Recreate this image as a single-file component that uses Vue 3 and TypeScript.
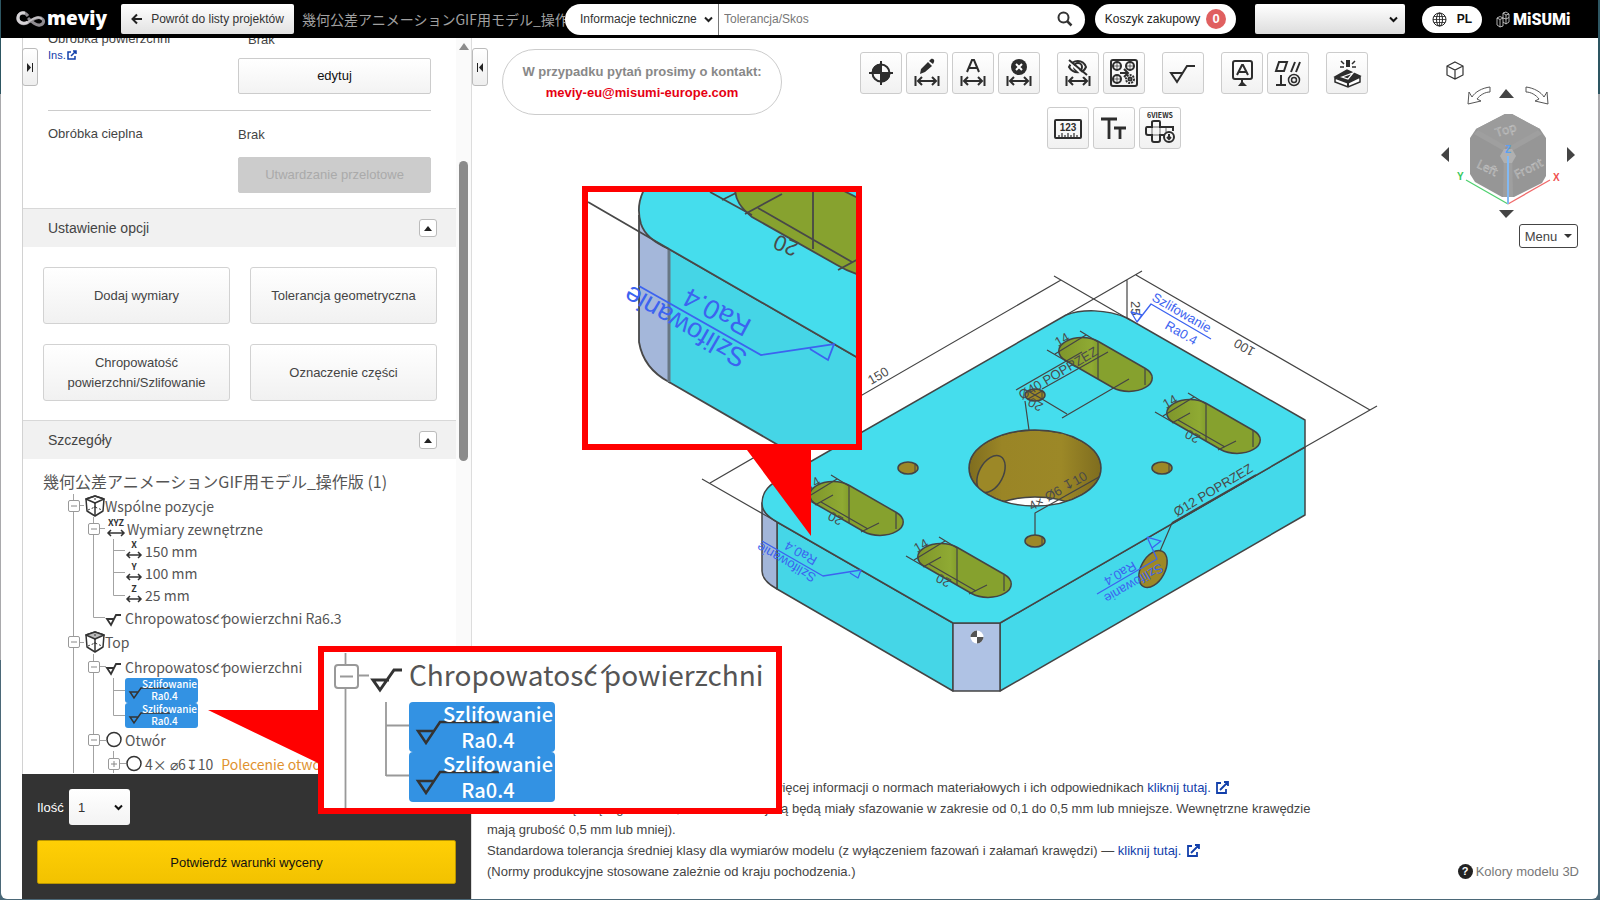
<script setup lang="ts">
import { ref } from 'vue'

interface TreeRow {
  level: number
  kind: 'cube' | 'cubeTop' | 'xyz' | 'axis' | 'finish' | 'circle' | 'badge'
  text: string
  toggle?: '-' | '+'
  axis?: string
  note?: string
}

const roughness = 'Chropowatos\u0301c\u0301 powierzchni'

const rows: TreeRow[] = [
  { level: 0, kind: 'cube', text: 'Wspólne pozycje', toggle: '-' },
  { level: 1, kind: 'xyz', text: 'Wymiary zewnętrzne', toggle: '-' },
  { level: 2, kind: 'axis', axis: 'X', text: '150 mm' },
  { level: 2, kind: 'axis', axis: 'Y', text: '100 mm' },
  { level: 2, kind: 'axis', axis: 'Z', text: '25 mm' },
  { level: 1, kind: 'finish', text: roughness + ' Ra6.3' },
  { level: 0, kind: 'cubeTop', text: 'Top', toggle: '-' },
  { level: 1, kind: 'finish', text: roughness, toggle: '-' },
  { level: 2, kind: 'badge', text: 'Szlifowanie' },
  { level: 2, kind: 'badge', text: 'Szlifowanie' },
  { level: 1, kind: 'circle', text: 'Otwór', toggle: '-' },
  { level: 2, kind: 'circle', text: '4× ⌀6↧10', toggle: '+', note: 'Polecenie otworu' },
]

const toolGroups: string[][] = [
  ['origin', 'dimEdit', 'dimAuto', 'dimDelete'],
  ['dimHide', 'pattern'],
  ['finish'],
  ['datum', 'gdt'],
  ['engrave'],
]
const toolsSecond = ['ruler', 'textSize', 'views']

const toolNames: Record<string, string> = {
  origin: 'Punkt bazowy', dimEdit: 'Edytuj wymiar', dimAuto: 'Wymiar automatyczny', dimDelete: 'Usuń wymiar',
  dimHide: 'Ukryj wymiary', pattern: 'Szyk otworów', finish: 'Chropowatość', datum: 'Baza', gdt: 'Tolerancja geometryczna',
  engrave: 'Oznaczenie', ruler: 'Pomiar', textSize: 'Rozmiar tekstu', views: 'Sześć widoków',
}

const slots = [
  { x: 1082, y: 351, full: false },
  { x: 1190, y: 413, full: true },
  { x: 833, y: 495, full: true },
  { x: 941, y: 557, full: true },
]
const holes = [[1035, 541], [1162, 468], [908, 468], [1035, 395]]

const quantity = ref('1')
const topic = ref('info')
const query = ref('')
const account = ref('')
</script>

<template>
  <div class="desktop">
    <div class="window">
      <header class="bar">
        <a class="brand" href="#" aria-label="meviy">
          <svg width="30" height="18" viewBox="0 0 30 18" fill="none">
            <path d="M12 6C9 2 3 2 2 7C1 12 6 15 11 13C17 10 20 6 25 8C29 10 28 14 24 15C20 16 16 12 12 8" stroke="#8f8b90" stroke-width="3" />
            <path d="M9 3C5 2 2 4 2 8C2 12 7 15 12 12" stroke="#d6d3d6" stroke-width="3" />
            <path d="M12 12C18 8 22 6 26 9" stroke="#c4c1c4" stroke-width="2" />
          </svg>
          <span>meviy</span>
        </a>
        <button class="back" type="button">
          <svg width="12" height="12" viewBox="0 0 12 12" fill="none" stroke="#222" stroke-width="2"><path d="M11 6H2M6 1.500L1.500 6L6 10.500" /></svg>
          Powrót do listy projektów
        </button>
        <span class="project">幾何公差アニメーションGIF用モデル_操作版</span>
        <form class="search" @submit.prevent>
          <span class="pick topic">
            <select v-model="topic" aria-label="Zakres wyszukiwania"><option value="info">Informacje techniczne</option></select>
            <svg width="9" height="7" viewBox="0 0 9 7" fill="none" stroke="#222" stroke-width="2"><path d="M1 1.500L4.500 5L8 1.500" /></svg>
          </span>
          <input v-model="query" type="text" placeholder="Tolerancja/Skos" aria-label="Szukaj" />
          <button type="submit" aria-label="Szukaj">
            <svg width="16" height="16" viewBox="0 0 16 16" fill="none" stroke="#333"><circle cx="6.500" cy="6.500" r="5" stroke-width="2" /><path d="M10 10L14.500 14.500" stroke-width="2.500" /></svg>
          </button>
        </form>
        <button class="cart" type="button">Koszyk zakupowy <b>0</b></button>
        <span class="pick account">
          <select v-model="account" aria-label="Konto"><option value=""></option></select>
          <svg width="9" height="7" viewBox="0 0 9 7" fill="none" stroke="#111" stroke-width="2"><path d="M1 1.500L4.500 5L8 1.500" /></svg>
        </span>
        <button class="lang" type="button">
          <svg width="15" height="15" viewBox="0 0 15 15" fill="none" stroke="#222"><circle cx="7.500" cy="7.500" r="6.500" /><ellipse cx="7.500" cy="7.500" rx="3" ry="6.500" /><path d="M1 7.500H14M2 4.500H13M2 10.500H13M7.500 1V14" stroke-width=".8" /></svg>
          PL
        </button>
        <a class="misumi" href="#" aria-label="MiSUMi">
          <svg width="14" height="17" viewBox="0 0 14 17" fill="none" stroke="#ddd" stroke-width=".8"><path d="M1 7L4 5.500L7 7V15L4 16L1 14ZM1 7L4 8.500V16M4 8.500L7 7L7 2L10 1L13 3V11L10 13L7 11M7 2L10 4V8L13 6.500M10 8L7 7M10 8V13M10 4L13 3" /></svg>
          <span>MiSUMi</span>
        </a>
      </header>

      <div class="body">
        <aside class="panel">
          <button class="fold" type="button" aria-label="Zwiń panel"><svg width="8" height="9" viewBox="0 0 8 9"><path d="M1 0L5 4.500L1 9Z" fill="#222" /><path d="M6.500 0V9" stroke="#222" /></svg></button>
          <div class="scroll">
            <div class="content">
              <section class="props">
                <div class="prop first">
                  <div>
                    <div class="label">Obróbka powierzchni</div>
                    <a href="#" class="ins">Ins.<svg width="10" height="10" viewBox="0 0 10 10" fill="none" stroke="#1240ab" stroke-width="1.500"><path d="M4 2H1V9H8V6M4 6L9 1M6 1H9V4" /></svg></a>
                  </div>
                  <div class="value">
                    <div class="shift">Brak</div>
                    <button class="wide" type="button">edytuj</button>
                  </div>
                </div>
                <div class="prop second">
                  <div class="label">Obróbka cieplna</div>
                  <div class="value">
                    <div>Brak</div>
                    <button class="wide off" type="button" disabled>Utwardzanie przelotowe</button>
                  </div>
                </div>
              </section>
              <h2 class="head">Ustawienie opcji<button type="button" aria-label="Zwiń"><svg width="8" height="5" viewBox="0 0 8 5"><path d="M0 5L4 0L8 5Z" fill="#222" /></svg></button></h2>
              <div class="options">
                <button type="button">Dodaj wymiary</button>
                <button type="button">Tolerancja geometryczna</button>
                <button type="button">Chropowatość powierzchni/Szlifowanie</button>
                <button type="button">Oznaczenie części</button>
              </div>
              <h2 class="head">Szczegóły<button type="button" aria-label="Zwiń"><svg width="8" height="5" viewBox="0 0 8 5"><path d="M0 5L4 0L8 5Z" fill="#222" /></svg></button></h2>
              <div class="model-name">幾何公差アニメーションGIF用モデル_操作版 (1)</div>
              <div class="tree">
                <svg class="wires" width="433" height="280" viewBox="23 494 433 280" fill="none" stroke="#a3a3a3" stroke-width="1">
                  <path d="M73.500 495V774M93.500 518V618.500H105M80 506.500H84M100 529.500H105M113.500 540V596.500H125M113.500 551.500H125M113.500 573.500H125M80 643.500H84M93.500 655V774M100 667.500H106M113.500 679V716.500H125M113.500 691.500H125M100 741.500H106M113.500 752V774M120 764.500H126" />
                </svg>
                <ul>
                  <li v-for="(row, i) in rows" :key="i" :class="['row', 'level-' + row.level, 'is-' + row.kind]">
                    <button v-if="row.toggle" class="knob" type="button" :aria-label="row.toggle === '-' ? 'Zwiń' : 'Rozwiń'">
                      <svg width="10" height="10" viewBox="1 1 10 10" stroke="#888" fill="none"><path d="M3 6H9" /><path v-if="row.toggle === '+'" d="M6 3V9" /></svg>
                    </button>
                    <span v-else class="knob-space"></span>
                    <svg v-if="row.kind === 'cube' || row.kind === 'cubeTop'" width="20" height="22" viewBox="0 0 20 22" fill="none" stroke="#333" stroke-width="1.500" stroke-linejoin="round">
                      <path d="M1 4L10 1L19 4L18 16L10 21L2 16Z" /><path d="M1 4L10 8L19 4L10 1Z" :fill="row.kind === 'cubeTop' ? '#bbb' : 'none'" /><path d="M10 8V21" /><path d="M10 3V13M3 15L10 12L17 15" stroke-width="1" stroke-dasharray="2 2" />
                    </svg>
                    <svg v-else-if="row.kind === 'xyz'" width="22" height="22" viewBox="0 0 22 22" fill="none" stroke="#333" stroke-width="2">
                      <text x="11" y="8" text-anchor="middle" class="tiny">XYZ</text><path d="M3 15H19M6 12L3 15L6 18M16 12L19 15L16 18" stroke-width="1.500" />
                    </svg>
                    <svg v-else-if="row.kind === 'axis'" width="20" height="22" viewBox="0 0 20 22" fill="none" stroke="#333">
                      <text x="9" y="8" text-anchor="middle" class="tiny">{{ row.axis }}</text><path d="M2 15H16M5 12L2 15L5 18M13 12L16 15L13 18" stroke-width="1.500" />
                    </svg>
                    <svg v-else-if="row.kind === 'finish'" width="20" height="22" viewBox="0 0 20 22" fill="none" stroke="#333" stroke-width="1.800"><path d="M16 8H11L6 18L2 12H9" /></svg>
                    <svg v-else-if="row.kind === 'circle'" width="20" height="22" viewBox="0 0 20 22" fill="none" stroke="#333" stroke-width="1.500"><circle cx="9" cy="10.500" r="7" /></svg>
                    <span v-if="row.kind === 'badge'" class="badge">
                      <svg width="73" height="25" viewBox="0 0 73 25" fill="none" stroke="#333" stroke-width="1.500"><path d="M45 10H16L9 20L5 14H13" /></svg>
                      <span>{{ row.text }}</span><span class="ra">Ra0.4</span>
                    </span>
                    <span v-else class="text">{{ row.text }}</span>
                    <span v-if="row.note" class="note">{{ row.note }}</span>
                  </li>
                </ul>
              </div>
            </div>
            <div class="track" aria-hidden="true"><svg width="10" height="7" viewBox="0 0 10 7"><path d="M0 7L5 0L10 7Z" fill="#8b8b8b" /></svg><i></i></div>
          </div>
          <div class="order">
            <div class="amount">
              <label for="qty">Ilość</label>
              <span class="pick qty">
                <select id="qty" v-model="quantity"><option>1</option></select>
                <svg width="9" height="7" viewBox="0 0 9 7" fill="none" stroke="#111" stroke-width="2"><path d="M1 1.500L4.500 5L8 1.500" /></svg>
              </span>
            </div>
            <button class="confirm" type="button">Potwierdź warunki wyceny</button>
          </div>
        </aside>

        <main class="stage">
          <svg class="scene" viewBox="472 38 1126 861" preserveAspectRatio="xMinYMin meet" fill="none" stroke="#444" stroke-width="1.500" stroke-linejoin="round">
            <defs>
              <linearGradient id="bore" x1="0" x2="1" y1="0" y2="0"><stop offset="0" stop-color="#7f6d1f" /><stop offset=".25" stop-color="#9a8526" /><stop offset=".7" stop-color="#9c8827" /><stop offset="1" stop-color="#7f6d1f" /></linearGradient>
              <linearGradient id="slotFill" x1="0" x2="1" y1="0" y2="0"><stop offset="0" stop-color="#7f962b" /><stop offset=".35" stop-color="#8faa33" /><stop offset=".4" stop-color="#86a12e" /><stop offset="1" stop-color="#86a12e" /></linearGradient>
              <clipPath id="boreClip"><ellipse cx="1035" cy="468" rx="66" ry="38" /></clipPath>
            </defs>
            <path d="M777 522L953 623V691L777 589Z" fill="#45d6e7" />
            <path d="M1000 623L1305 447V515L1000 691Z" fill="#44d9ea" />
            <path d="M762 503V571C762 578 768 584 777 589V522C768 516 762 511 762 503Z" fill="#a2b6d9" />
            <path d="M953 623H1000V691H953Z" fill="#afc2e4" />
            <path d="M762 503C762 491 770 484 782 478L1066 315C1082 309 1106 309 1127 318L1305 420V447L1000 623H953L777 522C767 516 762 511 762 503Z" fill="#45dded" />

            <g stroke-width="1.200">
              <path d="M702 479L777 522M710 483L1061 280M1054 276L1130 320M1066 315L1142 271M1136 275L1370 410M1377 406L1305 447M1127 280V318" />
            </g>

            <g v-for="(s, i) in slots" :key="i" :transform="`translate(${s.x} ${s.y})`" stroke-width="1.200">
              <path d="M16.400 -9.500L63.400 17.500A23.200 13.400 0 0 1 30.600 36.500L-16.400 9.500A23.200 13.400 0 0 1 16.400 -9.500Z" fill="url(#slotFill)" stroke-width="1.500" />
              <path d="M16 -9V28M63 18V34M-2 -20L16 -9M-27 3L4 -16M-35 -1L-16 10" />
              <path v-if="s.full" d="M-12 7L35 34M-18 10L0 0M28 37L46 28" />
              <text x="-24" y="-4" transform="rotate(-30 -24 -4)" class="dim">14</text>
              <text v-if="s.full" x="11" y="23" transform="rotate(208 11 23)" class="dim">20</text>
            </g>

            <g v-for="(h, i) in holes" :key="'h' + i">
              <ellipse :cx="h[0]" :cy="h[1]" rx="10" ry="6" fill="#9c8827" />
              <path :d="`M${h[0] + 7} ${h[1] - 4}v8`" stroke-width="1" />
            </g>

            <g clip-path="url(#boreClip)">
              <ellipse cx="1035" cy="468" rx="66" ry="38" fill="url(#bore)" />
              <ellipse cx="991" cy="474" rx="12" ry="20" transform="rotate(28 991 474)" fill="#9c8827" />
              <ellipse cx="1035" cy="536" rx="66" ry="39" fill="#fff" />
            </g>
            <ellipse cx="1035" cy="468" rx="66" ry="38" />
            <ellipse cx="1153" cy="569" rx="12" ry="20" transform="rotate(28 1153 569)" fill="#9c8827" />

            <g stroke-width="1.200">
              <path d="M1035 535V513L1099 477M1025 401L1029 430M1016 390L1082 352M1042 389L1108 352M1129 379L1062 418M1067 414L1042 399M1028 391L1042 399M1042 391L1028 399M1172 523L1160 551" />
              <path d="M1172 523L1256 475" stroke-width="2" />
            </g>
            <g class="dim">
              <text x="871" y="385" transform="rotate(-30 871 385)">150</text>
              <text x="1256" y="349" transform="rotate(210 1256 349)">100</text>
              <text x="1131" y="301" transform="rotate(90 1131 301)">25</text>
              <text x="1044" y="404" transform="rotate(208 1044 404)">20</text>
              <text x="1022" y="400" transform="rotate(-31 1022 400)">Ø40 POPRZEZ</text>
              <text x="1032" y="511" transform="rotate(-30 1032 511)">4× Ø6 ↧10</text>
              <text x="1177" y="517" transform="rotate(-31 1177 517)">Ø12 POPRZEZ</text>
            </g>

            <g stroke="#3c63f0" stroke-width="1.300">
              <path d="M1137 322L1151 304L1211 339M1137 322L1131 312L1142 315Z" />
              <path d="M861 570L823 576L762 541M861 570L858 578L850 573" />
              <path d="M1147 537L1157 559L1097 594M1147 537L1161 541L1152 548" />
            </g>
            <g class="dim blue">
              <text x="1151" y="300" transform="rotate(30 1151 300)">Szlifowanie</text>
              <text x="1164" y="328" transform="rotate(30 1164 328)">Ra0.4</text>
              <text x="817" y="575" transform="rotate(210 817 575)">Szlifowanie</text>
              <text x="818" y="558" transform="rotate(210 818 558)">Ra0.4</text>
              <text x="1160" y="563" transform="rotate(150 1160 563)">Szlifowanie</text>
              <text x="1133" y="561" transform="rotate(150 1133 561)">Ra0.4</text>
            </g>
            <g stroke="none"><circle cx="977" cy="637" r="6.500" fill="#fff" /><path d="M977 637V630.500A6.500 6.500 0 0 1 983.500 637ZM977 637V643.500A6.500 6.500 0 0 1 970.500 637Z" fill="#555" transform="rotate(90 977 637)" /></g>
          </svg>

          <button class="fold" type="button" aria-label="Rozwiń panel"><svg width="8" height="9" viewBox="0 0 8 9"><path d="M7 0L3 4.500L7 9Z" fill="#222" /><path d="M1.500 0V9" stroke="#222" /></svg></button>

          <div class="top">
            <div class="contact">W przypadku pytań prosimy o kontakt:<a href="mailto:meviy-eu@misumi-europe.com">meviy-eu@misumi-europe.com</a></div>
            <div class="tools">
              <div v-for="(line, li) in [toolGroups, [toolsSecond]]" :key="li" class="tool-line">
                <div v-for="(group, gi) in line" :key="gi" class="group">
                  <button v-for="t in group" :key="t" type="button" :aria-label="toolNames[t]">
                    <svg width="40" height="40" viewBox="1 1 40 40" fill="none" stroke="#2d2d2d" stroke-width="2">
                      <template v-if="t === 'origin'"><circle cx="21" cy="21" r="8.500" /><path d="M21 9V33M9 21H33" /><path d="M21 21V12.500A8.500 8.500 0 0 0 12.500 21ZM21 21V29.500A8.500 8.500 0 0 0 29.500 21Z" fill="#2d2d2d" /></template>
                      <path v-if="t.startsWith('dim')" d="M9.500 24V34M32.500 24V34M12 29H30M16 25L12 29L16 33M26 25L30 29L26 33" />
                      <path v-if="t === 'dimEdit'" d="M14 22L15 17L22 10L26 14L19 20ZM23 9L25 7C27 6 29 8 28 10L27 12Z" fill="#2d2d2d" stroke="none" />
                      <path v-if="t === 'dimAuto'" d="M15 20L20 8H22L27 20M17 16H25" />
                      <template v-if="t === 'dimDelete'"><circle cx="21" cy="15" r="8" fill="#2d2d2d" stroke="none" /><path d="M18 12L24 18M24 12L18 18" stroke="#fff" /></template>
                      <template v-if="t === 'dimHide'"><path d="M12 15C16 7 26 7 29 15C26 22 16 22 12 15Z" /><circle cx="21" cy="15" r="4" /><path d="M11 9L27 24" stroke="#fafafa" stroke-width="2" /><path d="M12 8L30 23" /></template>
                      <template v-if="t === 'pattern'"><rect x="8" y="8" width="26" height="26" rx="2" /><circle cx="14" cy="14" r="4" /><circle cx="27" cy="14" r="4" /><circle cx="14" cy="27" r="4" /><circle cx="27" cy="27" r="4" stroke-dasharray="2 1" /><circle cx="27" cy="27" r="1.500" /><path d="M17 21H24M21 17L25 21L21 25" /><path d="M9 14H19M14 9V19M22 14H32M27 9V19M9 27H19M14 22V32" stroke-width=".7" /></template>
                      <path v-if="t === 'finish'" d="M33 14H25L15 30L9 21H21" />
                      <template v-if="t === 'datum'"><rect x="12" y="9" width="19" height="18" rx="2" /><path d="M16 23L21 13H22L27 23M18 20H25M21 27V33" /><path d="M17 34L21 29L26 34Z" fill="#2d2d2d" stroke="none" /></template>
                      <template v-if="t === 'gdt'"><path d="M12 10H20L17 19H9ZM24 20L28 10M29 20L33 10M14 23V32M9 33H19" /><circle cx="27" cy="28" r="5.500" stroke-width="1.500" /><circle cx="27" cy="28" r="2.500" stroke-width="1.500" /></template>
                      <template v-if="t === 'engrave'"><path d="M9 25L21 18L34 24L22 31Z" fill="#2d2d2d" stroke-width="1.500" /><path d="M9 26V30L22 35L34 30V25L22 31Z" fill="#fff" stroke-width="1.500" /><path d="M22 31V34" /><path d="M16 25L27 21L22 27Z" stroke="#fff" stroke-width="1.300" /><path d="M22 8V15" stroke-width="4" /><path d="M15 9L18 12M29 9L26 12M14 15H18M26 15H30" stroke-width="1.500" /></template>
                      <template v-if="t === 'ruler'"><rect x="8" y="13" width="26" height="18" rx="1" /><text x="21" y="24" text-anchor="middle" class="ico-num">123</text><path d="M12 31V28M15 31V26M18 31V28M21 31V26M24 31V28M27 31V26M30 31V28" stroke-width="1.200" /></template>
                      <path v-if="t === 'textSize'" d="M8 12H24M16 12V32M21 21H33M27 21V32" stroke-width="2.800" />
                      <template v-if="t === 'views'"><text x="21" y="11" text-anchor="middle" class="ico-cap">6VIEWS</text><path d="M13 15Q13 14 15 14H20Q21 14 21 15V20H34V24M13 15V20H8Q7 20 7 22V26Q7 28 9 28H13V33Q13 35 15 35H19Q21 35 21 33V28H25" /><path d="M13 20H21V28H13ZM27 20V25" stroke-width=".7" /><circle cx="30" cy="30" r="5" /><path d="M30 27V32M28 30L30 32L32 30" /></template>
                    </svg>
                  </button>
                </div>
              </div>
            </div>
            <div class="navigator">
              <svg width="148" height="166" viewBox="1436 58 148 166" fill="none">
                <path d="M1455 62L1463 66V75L1455 79L1447 75V66ZM1447 66L1455 70L1463 66M1455 70V79" stroke="#333" stroke-width="1.200" />
                <path d="M1490 87C1482 88 1475 92 1472 97L1469 92L1468 104L1481 101L1477 99C1480 95 1485 92 1490 92ZM1526 87C1534 88 1541 92 1544 97L1547 92L1548 104L1535 101L1539 99C1536 95 1531 92 1526 92Z" stroke="#555" />
                <path d="M1499 98L1506 89L1514 98ZM1499 210L1506 218L1514 210ZM1449 147L1441 155L1449 162ZM1567 147L1575 155L1567 162Z" fill="#444" />
                <path d="M1505 114H1512L1540 129L1546 138V176L1542 183L1514 197H1502L1475 182L1470 174V138L1476 129Z" fill="#969696" />
                <path d="M1476 129L1505 114H1512L1540 129L1510 147H1506Z" fill="#9b9b9b" />
                <path d="M1504 151L1512 151L1513 197H1503ZM1474 134L1478 130L1506 146L1504 151ZM1542 134L1538 130L1510 146L1512 151Z" fill="#9f9f9f" />
                <path d="M1504 149H1512L1516 156L1512 163H1504L1500 156Z" fill="#b0b0b0" />
                <path d="M1508 204L1466 180" stroke="#50d070" stroke-width="1.300" /><path d="M1508 204L1550 180" stroke="#f06a6a" stroke-width="1.300" /><path d="M1508 156V204" stroke="#82b9f3" stroke-width="2" />
                <g class="cube-text"><text x="1497" y="137" transform="rotate(-18 1497 137)">Top</text><text x="1476" y="167" transform="rotate(26 1476 167)">Left</text><text x="1517" y="179" transform="rotate(-27 1517 179)">Front</text></g>
                <g class="axis-text"><text x="1457" y="180" fill="#35c85a">Y</text><text x="1553" y="181" fill="#f05050">X</text><text x="1505" y="153" fill="#5aa0f0">Z</text></g>
              </svg>
              <button class="menu" type="button">Menu <svg width="8" height="4" viewBox="0 0 8 4"><path d="M0 0H8L4 4Z" fill="#333" /></svg></button>
            </div>
          </div>

          <footer class="notes">
            <div class="copy">
              <p class="indent">więcej informacji o normach materiałowych i ich odpowiednikach <a href="#">kliknij tutaj. <svg width="13" height="13" viewBox="0 0 13 13" fill="none" stroke="#1240ab" stroke-width="1.800"><path d="M5 2H1V12H10V8M4 9L11 2M8 1H12V5" /></svg></a></p>
              <p>Modele z krawędzią o grubości 0,5 mm lub mniejszą będą miały sfazowanie w zakresie od 0,1 do 0,5 mm lub mniejsze. Wewnętrzne krawędzie<br />mają grubość 0,5 mm lub mniej).</p>
              <p>Standardowa tolerancja średniej klasy dla wymiarów modelu (z wyłączeniem fazowań i załamań krawędzi) — <a href="#">kliknij tutaj. <svg width="13" height="13" viewBox="0 0 13 13" fill="none" stroke="#1240ab" stroke-width="1.800"><path d="M5 2H1V12H10V8M4 9L11 2M8 1H12V5" /></svg></a></p>
              <p>(Normy produkcyjne stosowane zależnie od kraju pochodzenia.)</p>
            </div>
            <a class="colors" href="#"><b>?</b>Kolory modelu 3D</a>
          </footer>
        </main>
      </div>
    </div>

    <svg class="callouts" width="1600" height="900" viewBox="0 0 1600 900" fill="none" stroke="#484848" stroke-width="1.800">
      <defs>
        <clipPath id="c1"><rect x="588" y="192" width="268" height="252" /></clipPath>
      </defs>
      <path d="M747 450H811V536ZM208 710H318V763Z" fill="#f00" stroke="none" />
      <rect x="585" y="189" width="274" height="258" fill="#fff" stroke="none" />
      <g clip-path="url(#c1)">
        <path d="M669 249L860 359V460H804L669 382Z" fill="#45d5e6" />
        <path d="M639 215V342C642 360 652 373 669 382V249C652 240 642 230 639 215Z" fill="#a4b7da" />
        <path d="M669 249V382" stroke="#687784" stroke-width="3" />
        <path d="M645 188C637 202 638 214 641 224C645 236 655 243 669 249L860 359V188Z" fill="#45dded" />
        <path d="M735 188C735 200 741 208 752 217L837 265Q847 271 860 275V199L838 188Z" fill="#87a22f" />
        <path d="M588 202L669 249M710 192L752 215M745 214L782 194M722 200L736 193M758 208L852 262M813 190V249M838 270L860 258" />
        <text x="800" y="243" transform="rotate(202 800 243)" class="dim mid">20</text>
        <path d="M639 286L761 355L834 344L828 360L810 349" stroke="#3c63f0" />
        <text x="749" y="353" transform="rotate(210 749 353)" class="dim blue big">Szlifowanie</text>
        <text x="753" y="321" transform="rotate(208 753 321)" class="dim blue big">Ra0.4</text>
      </g>
      <rect x="585" y="189" width="274" height="258" stroke="#f00" stroke-width="6" />
      <rect x="321" y="649" width="458" height="162" fill="#fff" stroke="#f00" stroke-width="6" />
      <path d="M345.500 653V808M358 675.500H369M386 702V776M386 725.500H409M386 775.500H409" stroke="#999" />
      <rect x="335" y="665" width="23" height="23" rx="3" fill="#fff" stroke="#999" stroke-width="2" /><path d="M340 676.500H353" stroke="#999" stroke-width="2" />
      <path d="M402 670H394L380 690L373 680H389" stroke="#333" stroke-width="3" />
      <text x="409" y="686" class="tree-big">{{ roughness }}</text>
      <g v-for="y in [702, 752]" :key="y" :transform="`translate(0 ${y})`">
        <rect x="409" y="0" width="146" height="50" rx="4" fill="#3392e3" stroke="none" />
        <path d="M499 20H440L426 41L418 29H434" stroke="#333" stroke-width="2.500" />
        <text x="498" y="20" text-anchor="middle" class="badge-big">Szlifowanie</text>
        <text x="488" y="46" text-anchor="middle" class="badge-big">Ra0.4</text>
      </g>
    </svg>
  </div>
</template>

<style>
body { margin: 0; background: #4b6268; }
</style>

<style scoped>
* { box-sizing: border-box; }
.desktop { position: relative; height: 100vh; padding: 0 2px 1px 1px; overflow: hidden; background: linear-gradient(#2d5662 0 94px, #a9a9ac 94px 660px, #4b6878 660px); font-family: "Liberation Sans", "Noto Sans CJK JP", sans-serif; font-size: 13px; color: #444; }
.window { display: flex; flex-direction: column; height: 100%; background: #fff; border-radius: 0 0 6px 6px; overflow: hidden; }
button, select, input { font: inherit; color: inherit; margin: 0; }
button { cursor: pointer; padding: 0; }
a { color: #1240ab; text-decoration: none; }
svg { flex: none; }
.bar { display: flex; align-items: center; height: 38px; background: #000; padding-left: 15px; flex: none; font-size: 12px; }
.brand { display: flex; align-items: center; gap: 1px; width: 105px; color: #fff; font: 800 19px "Open Sans", sans-serif; }
.brand span { margin-top: -2px; }
.back { display: flex; align-items: center; justify-content: center; gap: 8px; width: 173px; height: 30px; border: 0; border-radius: 2px; background: linear-gradient(#fff, #e2e2e2); color: #333; flex: none; }
.project { width: 263px; margin-left: 8px; overflow: hidden; white-space: nowrap; font: 14px/24px "Noto Sans CJK JP", sans-serif; color: #a0a0a0; flex: none; }
.search { display: flex; align-items: center; flex: 1; height: 31px; background: #fff; border-radius: 16px; padding-right: 12px; min-width: 0; }
.pick { position: relative; display: flex; align-items: center; }
.pick select { appearance: none; border: 0; background: transparent; outline: 0; width: 100%; height: 100%; padding: 0; }
.pick svg { position: absolute; right: 7px; pointer-events: none; }
.topic { width: 154px; height: 31px; border-right: 1px solid #777; color: #333; padding-left: 15px; }
.topic svg { right: 5px; }
.search input { flex: 1; min-width: 0; border: 0; outline: 0; padding: 0 5px; background: transparent; }
.search input::placeholder { color: #777; }
.search button { display: flex; border: 0; background: none; }
.cart { display: flex; align-items: center; justify-content: center; gap: 6px; width: 141px; height: 30px; margin-left: 10px; border: 0; border-radius: 15px; background: #fff; color: #222; flex: none; }
.cart b { width: 20px; line-height: 20px; border-radius: 50%; background: #e06060; color: #fff; font-size: 13px; }
.account { width: 150px; height: 30px; margin-left: 19px; border-radius: 2px; background: linear-gradient(#fff, #ddd); flex: none; }
.lang { display: flex; align-items: center; justify-content: center; gap: 10px; width: 60px; height: 27px; margin-left: 17px; border: 0; border-radius: 14px; background: #fff; color: #111; font-weight: bold; flex: none; }
.misumi { display: flex; align-items: center; gap: 3px; width: 116px; padding-left: 14px; color: #fff; font: 900 16px "Roboto", sans-serif; flex: none; }

.body { display: flex; flex: 1; min-height: 0; padding-left: 21px; }
.panel { position: relative; display: flex; flex-direction: column; width: 450px; border-left: 1px solid #d2d2d2; border-right: 1px solid #ddd; flex: none; }
.fold { position: absolute; left: -1px; top: 10px; display: flex; align-items: center; justify-content: center; width: 16px; height: 38px; border: 1px solid #bbb; border-radius: 3px; background: linear-gradient(#fff, #eee); z-index: 1; }
.stage .fold { left: 0; }
.scroll { display: flex; flex: 1; min-height: 0; overflow: hidden; }
.content { flex: 1; min-width: 0; }
.track { width: 15px; background: #fafafa; display: flex; flex-direction: column; align-items: center; padding-top: 5px; flex: none; }
.track i { width: 9px; height: 300px; margin-top: 111px; border-radius: 5px; background: #8b8b8b; flex: none; }
.props { padding: 0 25px 15px; font-size: 13px; line-height: 20px; color: #444; }
.prop { display: grid; grid-template-columns: 190px 1fr; }
.first { margin-top: -9px; padding-bottom: 16px; border-bottom: 1px solid #ccc; }
.second { padding-top: 13px; }
.second .value { padding-top: 1px; }
.shift { padding-left: 10px; padding-top: 1px; }
.ins { display: flex; align-items: center; gap: 1px; font-size: 11px; line-height: 12px; }
.wide { display: block; width: 100%; height: 36px; margin-top: 8px; border: 1px solid #ccc; border-radius: 2px; background: linear-gradient(#fff, #f3f3f3); color: #111; }
.second .wide { margin-top: 12px; }
.wide.off { background: #ccc; color: #aaa; }
.head { display: flex; align-items: center; justify-content: space-between; height: 39px; margin: 0; padding: 0 19px 0 25px; border-top: 1px solid #d8d8d8; background: #f1f1f1; font-size: 14px; font-weight: normal; color: #444; }
.head button { display: flex; align-items: center; justify-content: center; width: 18px; height: 18px; border: 1px solid #bbb; border-radius: 3px; background: #fff; }
.options { display: grid; grid-template-columns: 1fr 1fr; grid-auto-rows: 57px; gap: 20px; padding: 20px 19px 19px 20px; }
.options button { border: 1px solid #d2d2d2; border-radius: 3px; background: linear-gradient(#fff, #f1f1f1); line-height: 20px; color: #444; padding: 0 20px; }
.options button:nth-child(2) { padding: 0; }
.model-name { margin: 10px 0 0 20px; font: 16px/24px "Noto Sans CJK JP", sans-serif; white-space: nowrap; color: #555; }
.tree { position: relative; font-family: "Noto Sans CJK JP", sans-serif; font-size: 14px; color: #555; }
.wires { position: absolute; left: 0; top: 0; }
.tree ul { list-style: none; margin: 0; padding: 0; position: relative; }
.row { display: flex; align-items: center; height: 22px; padding-left: 45px; white-space: nowrap; line-height: 22px; }
.row.is-cube { height: 25px; }
.row.is-cubeTop { height: 26px; }
.row.is-finish { height: 23px; }
.row.is-badge { height: 25px; }
.row.is-circle { height: 24px; }
.row.level-1 { padding-left: 65px; }
.row.level-2 { padding-left: 85px; }
.knob { display: flex; width: 12px; height: 12px; margin-right: 5px; border: 1px solid #999; border-radius: 2px; background: #fff; flex: none; align-items: center; justify-content: center; }
.knob-space { width: 17px; flex: none; }
.tiny { font: bold 9px "Noto Sans CJK JP", sans-serif; fill: #333; stroke: none; }
.badge { position: relative; display: block; width: 73px; height: 25px; border-radius: 3px; background: #3392e3; color: #fff; font-size: 10px; font-weight: 500; line-height: 12px; text-align: center; }
.badge svg { position: absolute; left: 0; top: 0; }
.badge span { position: relative; display: block; padding-left: 16px; }
.badge .ra { padding-left: 6px; }
.note { margin-left: 8px; color: #e0922f; }
.order { height: 125px; margin-left: -1px; padding: 15px 15px 0; background: #333; flex: none; color: #fff; }
.amount { display: flex; align-items: center; gap: 4px; }
.qty { width: 61px; height: 36px; border-radius: 3px; background: linear-gradient(#fff, #f3f3f3); color: #333; padding-left: 9px; }
.amount label { width: 28px; white-space: nowrap; }
.confirm { display: block; width: 100%; height: 44px; margin-top: 15px; border: 1px solid #b99500; border-radius: 2px; background: linear-gradient(#ffcf05, #f2c200); color: #111; }

.stage { position: relative; display: flex; flex-direction: column; justify-content: space-between; flex: 1; min-width: 0; }
.scene { position: absolute; left: 0; top: 0; width: 100%; height: auto; }
.dim { font: 13px "Liberation Sans", sans-serif; fill: #4a4a4a; stroke: none; }
.dim.blue { fill: #3c63f0; }
.dim.mid { font-size: 22px; }
.dim.big { font-size: 27px; }
.top { position: relative; display: flex; align-items: flex-start; padding: 11px 14px 0 30px; }
.contact { width: 280px; height: 66px; padding-top: 11px; border: 1px solid #ccc; border-radius: 33px; text-align: center; font-weight: bold; line-height: 21px; color: #888; flex: none; }
.contact a { display: block; color: #e60012; }
.tools { flex: 1; display: flex; flex-direction: column; gap: 13px; padding-top: 3px; padding-left: 10px; }
.tool-line, .group { display: flex; justify-content: center; }
.tool-line { gap: 17px; }
.group { gap: 4px; }
.group button { display: flex; align-items: center; justify-content: center; width: 42px; height: 42px; border: 1px solid #ccc; border-radius: 3px; background: linear-gradient(#fff, #f1f1f1); }
.ico-num { font: bold 10px "Liberation Sans", sans-serif; fill: #2d2d2d; stroke: none; }
.ico-cap { font: bold 7px "Noto Sans CJK JP", sans-serif; fill: #2d2d2d; stroke: none; }
.navigator { display: flex; flex-direction: column; align-items: flex-end; padding-top: 9px; width: 148px; flex: none; }
.cube-text { font: 12px "Open Sans", sans-serif; fill: #8c8c8c; stroke: #c0c0c0; stroke-width: .6; }
.axis-text { font: bold 10px "Liberation Sans", sans-serif; }
.menu { display: flex; align-items: center; justify-content: center; gap: 7px; width: 59px; height: 24px; margin-right: 6px; border: 1px solid #444; border-radius: 3px; background: #fff; white-space: nowrap; }
.notes { position: relative; display: flex; justify-content: space-between; align-items: flex-end; padding: 0 19px 17px 15px; line-height: 21px; }
.notes p { margin: 0; white-space: nowrap; }
.notes .indent { padding-left: 286px; }
.notes svg { vertical-align: -2px; margin-left: 2px; }
.colors { display: flex; align-items: center; gap: 3px; color: #777; }
.colors b { width: 15px; line-height: 15px; border-radius: 50%; background: #222; color: #fff; font-size: 11px; text-align: center; }
.callouts { position: absolute; left: 0; top: 0; pointer-events: none; z-index: 3; }
.tree-big { font: 28px "Noto Sans CJK JP", sans-serif; fill: #555; stroke: none; }
.badge-big { font: 500 20px "Noto Sans CJK JP", sans-serif; fill: #fff; stroke: none; }
</style>
